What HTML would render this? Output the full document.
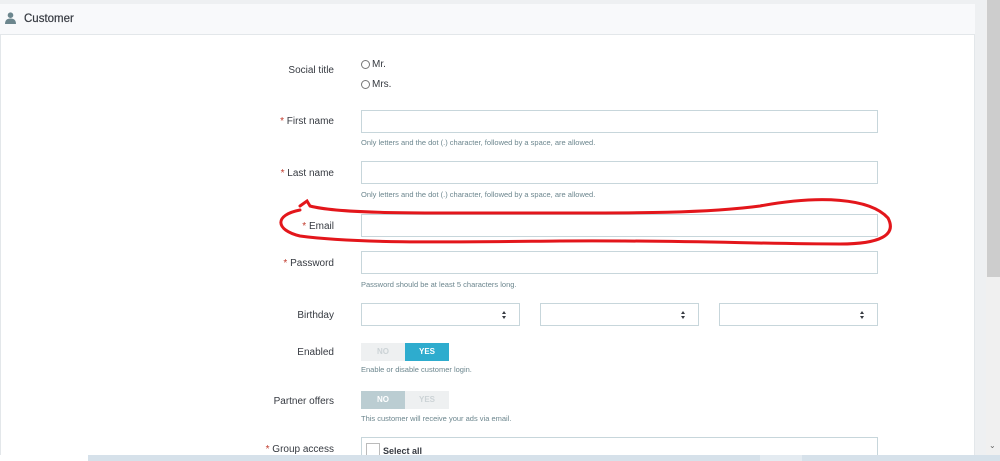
<!DOCTYPE html>
<html><head><meta charset="utf-8"><style>
*{margin:0;padding:0;box-sizing:border-box}
html,body{width:1000px;height:461px;overflow:hidden}
body{background:#eef0f2;font-family:"Liberation Sans",sans-serif;color:#363a41;position:relative}
.a{position:absolute}
.panel{left:0;top:4px;width:975px;height:460px;background:#fff;border:1px solid #e3e7ea}
.hdr{left:0;top:4px;width:975px;height:31px;background:#f8f9fb;border-bottom:1px solid #e3e7ea}
.lbl{font-size:10px;text-align:right;width:200px;left:134px;color:#363a41}
.lbl b{color:#c0392b;font-weight:normal}
.inp{left:361px;width:517px;height:23px;border:1px solid #c7d6db;background:#fff}
.help{left:361px;font-size:7.5px;color:#6c868e}
.sel{height:23px;width:159px;border:1px solid #c7d6db;background:#fff}
.sel:after{content:"";position:absolute;right:13px;top:7px;border-left:2.5px solid transparent;border-right:2.5px solid transparent;border-bottom:3px solid #363a41}
.sel:before{content:"";position:absolute;right:13px;top:12px;border-left:2.5px solid transparent;border-right:2.5px solid transparent;border-top:3px solid #363a41}
.tg{height:18px;width:44px;font-size:8px;text-align:center;line-height:18px;font-weight:bold}
.rad{width:9px;height:9px;border:1px solid #777;border-radius:50%}
</style></head><body>
<div class="a panel"></div>
<div class="a hdr"></div>
<svg class="a" style="left:5px;top:12px" width="11" height="12" viewBox="0 0 11 12"><circle cx="5.5" cy="3.2" r="2.8" fill="#6c868e"/><path d="M0 12 Q0 6.5 5.5 6.5 Q11 6.5 11 12Z" fill="#6c868e"/></svg>
<div class="a" style="left:24px;top:13px;font-size:11.5px;color:#363a41;-webkit-text-stroke:0.2px #363a41">Customer</div>
<div class="a" style="left:986px;top:0;width:14px;height:455px;background:#f0f0f0"></div>
<div class="a" style="left:987px;top:0;width:13px;height:277px;background:#cdcdcd"></div>
<div class="a" style="left:989px;top:441px;font-size:8px;color:#666">⌄</div>

<div class="a lbl" style="top:65px">Social title</div>
<div class="a rad" style="left:361px;top:60px"></div><div class="a" style="left:372px;top:59px;font-size:10px">Mr.</div>
<div class="a rad" style="left:361px;top:80px"></div><div class="a" style="left:372px;top:79px;font-size:10px">Mrs.</div>

<div class="a lbl" style="top:116px"><b>*</b> First name</div>
<div class="a inp" style="top:110px"></div>
<div class="a help" style="top:138px">Only letters and the dot (.) character, followed by a space, are allowed.</div>

<div class="a lbl" style="top:168px"><b>*</b> Last name</div>
<div class="a inp" style="top:161px"></div>
<div class="a help" style="top:190px">Only letters and the dot (.) character, followed by a space, are allowed.</div>

<div class="a lbl" style="top:221px"><b>*</b> Email</div>
<div class="a inp" style="top:214px"></div>

<div class="a lbl" style="top:258px"><b>*</b> Password</div>
<div class="a inp" style="top:251px"></div>
<div class="a help" style="top:280px">Password should be at least 5 characters long.</div>

<div class="a lbl" style="top:310px">Birthday</div>
<div class="a sel" style="left:361px;top:303px"></div>
<div class="a sel" style="left:540px;top:303px"></div>
<div class="a sel" style="left:719px;top:303px"></div>

<div class="a lbl" style="top:347px">Enabled</div>
<div class="a tg" style="left:361px;top:343px;background:#eef0f1;color:#ccd3d6">NO</div>
<div class="a tg" style="left:405px;top:343px;background:#2eacce;color:#fff">YES</div>
<div class="a help" style="top:365px">Enable or disable customer login.</div>

<div class="a lbl" style="top:396px">Partner offers</div>
<div class="a tg" style="left:361px;top:391px;background:#bbcdd2;color:#fff">NO</div>
<div class="a tg" style="left:405px;top:391px;background:#eef0f1;color:#ccd3d6">YES</div>
<div class="a help" style="top:414px">This customer will receive your ads via email.</div>

<div class="a lbl" style="top:444px"><b>*</b> Group access</div>
<div class="a" style="left:361px;top:437px;width:517px;height:30px;border:1px solid #c7d6db"></div>
<div class="a" style="left:366px;top:443px;width:14px;height:14px;border:1px solid #bbb;background:#fff"></div>
<div class="a" style="left:383px;top:446px;font-size:9px;font-weight:bold">Select all</div>

<div class="a" style="left:0;top:455px;width:1000px;height:6px;background:#d6e1ea"></div>
<div class="a" style="left:0;top:455px;width:88px;height:6px;background:#fff"></div>
<div class="a" style="left:760px;top:455px;width:42px;height:6px;background:#e4ebf1"></div>

<svg class="a" style="left:0;top:0" width="1000" height="461"><path d="M300 206 L307 201 L310 206 C340 214 420 213 520 213 C620 213 700 214 760 206 C820 195 870 198 888 218 C897 235 880 244 840 244 C760 244 680 240 560 241 C460 242 360 244 300 236 C275 230 274 215 300 210" fill="none" stroke="#e3161b" stroke-width="3" stroke-linecap="round"/></svg>
</body></html>
